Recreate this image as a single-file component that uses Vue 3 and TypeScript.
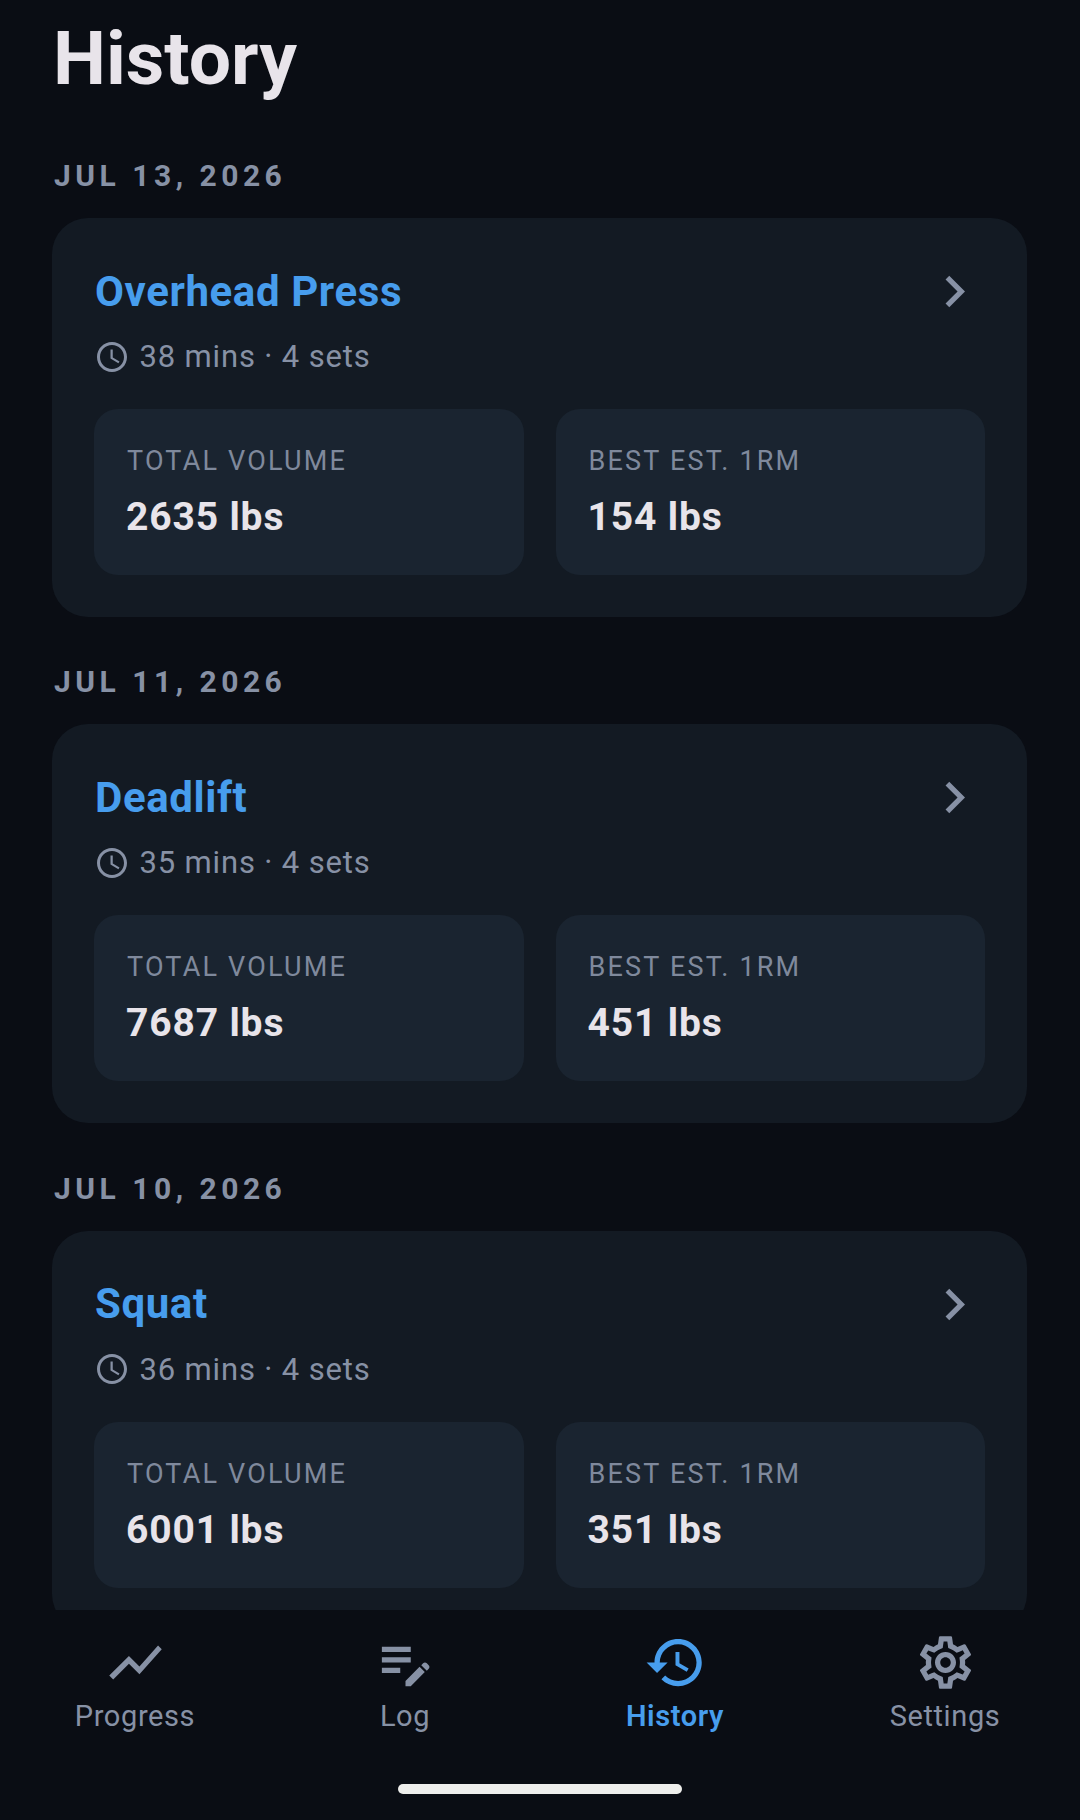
<script setup lang="ts">
interface Workout {
  date: string
  name: string
  mins: number
  sets: number
  volume: number
  best: number
}

const workouts: Workout[] = [
  { date: 'JUL 13, 2026', name: 'Overhead Press', mins: 38, sets: 4, volume: 2635, best: 154 },
  { date: 'JUL 11, 2026', name: 'Deadlift', mins: 35, sets: 4, volume: 7687, best: 451 },
  { date: 'JUL 10, 2026', name: 'Squat', mins: 36, sets: 4, volume: 6001, best: 351 },
]

const tabs = [
  {
    label: 'Progress',
    path: 'M3.5 18.49l6-6.01 4 4L22 6.92l-1.41-1.41-7.09 7.97-4-4L2 16.99z',
  },
  {
    label: 'Log',
    path: 'M3 10h11v2H3zm0-4h11v2H3zm0 8h7v2H3zM12 19l5.35-5.35 2 2L14 21h-2zM18 13l.71-.71c.39-.39 1.02-.39 1.41 0l.71.71c.39.39.39 1.02 0 1.41l-.71.71z',
  },
  {
    label: 'History',
    active: true,
    path: 'M13 3c-4.97 0-9 4.03-9 9H1l3.89 3.89.07.14L9 12H6c0-3.87 3.13-7 7-7s7 3.13 7 7-3.13 7-7 7c-1.93 0-3.68-.79-4.94-2.06l-1.42 1.42C8.27 19.99 10.51 21 13 21c4.97 0 9-4.03 9-9s-4.03-9-9-9zm-1 5v5l4.28 2.54.72-1.21-3.5-2.08V8H12z',
  },
  {
    label: 'Settings',
    path: 'M19.43 12.98c.04-.32.07-.64.07-.98 0-.34-.03-.66-.07-.98l2.11-1.65c.19-.15.24-.42.12-.64l-2-3.46c-.09-.16-.26-.25-.44-.25-.06 0-.12.01-.17.03l-2.49 1c-.52-.4-1.08-.73-1.69-.98l-.38-2.65C14.46 2.18 14.25 2 14 2h-4c-.25 0-.46.18-.49.42l-.38 2.65c-.61.25-1.17.59-1.69.98l-2.49-1c-.06-.02-.12-.03-.18-.03-.17 0-.34.09-.43.25l-2 3.46c-.13.22-.07.49.12.64l2.11 1.65c-.04.32-.07.65-.07.98 0 .33.03.66.07.98l-2.11 1.65c-.19.15-.24.42-.12.64l2 3.46c.09.16.26.25.44.25.06 0 .12-.01.17-.03l2.49-1c.52.4 1.08.73 1.69.98l.38 2.65c.03.24.24.42.49.42h4c.25 0 .46-.18.49-.42l.38-2.65c.61-.25 1.17-.59 1.69-.98l2.49 1c.06.02.12.03.18.03.17 0 .34-.09.43-.25l2-3.46c.12-.22.07-.49-.12-.64l-2.11-1.65zm-1.98-1.71c.04.31.05.52.05.73 0 .21-.02.43-.05.73l-.14 1.13.89.7 1.08.84-.7 1.21-1.27-.51-1.04-.42-.9.68c-.43.32-.84.56-1.25.73l-1.06.43-.16 1.13-.2 1.35h-1.4l-.19-1.35-.16-1.13-1.06-.43c-.43-.18-.83-.41-1.23-.71l-.91-.7-1.06.43-1.27.51-.7-1.21 1.08-.84.89-.7-.14-1.13c-.03-.31-.05-.54-.05-.74s.02-.43.05-.73l.14-1.13-.89-.7-1.08-.84.7-1.21 1.27.51 1.04.42.9-.68c.43-.32.84-.56 1.25-.73l1.06-.43.16-1.13.2-1.35h1.39l.19 1.35.16 1.13 1.06.43c.43.18.83.41 1.23.71l.91.7 1.06-.43 1.27-.51.7 1.21-1.07.85-.89.7.14 1.13zM12 8c-2.21 0-4 1.79-4 4s1.79 4 4 4 4-1.79 4-4-1.79-4-4-4zm0 6c-1.1 0-2-.9-2-2s.9-2 2-2 2 .9 2 2-.9 2-2 2z',
  },
]
</script>

<template>
  <div class="screen">
    <main class="content">
      <h1 class="title">History</h1>
      <section v-for="w in workouts" :key="w.date" class="day">
        <div class="date">{{ w.date }}</div>
        <div class="card">
          <div class="card-head">
            <span class="name">{{ w.name }}</span>
            <svg class="chevron" viewBox="0 0 24 24"><path d="M10 6 8.59 7.41 13.17 12l-4.58 4.59L10 18l6-6z" /></svg>
          </div>
          <div class="meta">
            <svg class="clock" viewBox="0 0 24 24"><path d="M11.99 2C6.47 2 2 6.48 2 12s4.47 10 9.99 10C17.52 22 22 17.52 22 12S17.52 2 11.99 2zM12 20c-4.42 0-8-3.58-8-8s3.58-8 8-8 8 3.58 8 8-3.58 8-8 8zm.5-13H11v6l5.25 3.15.75-1.23-4.5-2.67z" /></svg>
            <span>{{ w.mins }} mins · {{ w.sets }} sets</span>
          </div>
          <div class="stats">
            <div class="stat">
              <div class="stat-label">TOTAL VOLUME</div>
              <div class="stat-value">{{ w.volume }} lbs</div>
            </div>
            <div class="stat">
              <div class="stat-label">BEST EST. 1RM</div>
              <div class="stat-value">{{ w.best }} lbs</div>
            </div>
          </div>
        </div>
      </section>
    </main>

    <nav class="nav">
      <div class="tabs">
        <div v-for="t in tabs" :key="t.label" class="tab" :class="{ active: t.active }">
          <svg class="tab-icon" viewBox="0 0 24 24"><path :d="t.path" /></svg>
          <span class="tab-label">{{ t.label }}</span>
        </div>
      </div>
      <div class="home-pill"></div>
    </nav>
  </div>
</template>

<style scoped>
.screen {
  width: 1080px;
  height: 1820px;
  display: flex;
  flex-direction: column;
  background: #0a0d14;
  font-family: Roboto, "Liberation Sans", sans-serif;
  overflow: hidden;
}

.content {
  flex: 1;
  min-height: 0;
  overflow: hidden;
  padding: 16px 53px 0 52px;
}

.title {
  margin: 0 0 56px 1px;
  font-size: 75px;
  line-height: 84px;
  font-weight: 700;
  color: #e8e4ea;
}

.day {
  margin-bottom: 45.4px;
}

.date {
  margin: 0 0 22px 2px;
  font-size: 30px;
  line-height: 40px;
  font-weight: 700;
  letter-spacing: 4.5px;
  color: #8791a5;
}

.card {
  height: 399px;
  box-sizing: border-box;
  padding: 42px;
  border-radius: 36px;
  background: #131a23;
}

.card-head {
  height: 63px;
  display: flex;
  align-items: center;
  justify-content: space-between;
}

.name {
  margin-left: 1px;
  font-size: 42px;
  line-height: 50px;
  font-weight: 700;
  letter-spacing: 0.6px;
  color: #479ded;
}

.chevron {
  width: 63px;
  height: 63px;
  margin-right: -1px;
  fill: #8791a5;
}

.meta {
  margin-top: 15.5px;
  height: 36px;
  display: flex;
  align-items: center;
  gap: 9.5px;
  font-size: 31px;
  letter-spacing: 0.85px;
  color: #8791a5;
}

.clock {
  width: 36px;
  height: 36px;
  fill: #8791a5;
}

.stats {
  margin-top: 34.5px;
  display: grid;
  grid-template-columns: 1fr 1fr;
  gap: 32px;
}

.stat {
  padding: 34px 32px;
  border-radius: 24px;
  background: #1a2430;
}

.stat-label {
  margin-left: 1px;
  font-size: 27px;
  line-height: 36px;
  letter-spacing: 2.2px;
  color: #7f899c;
}

.stat-value {
  margin-top: 14px;
  font-size: 39px;
  line-height: 48px;
  font-weight: 700;
  letter-spacing: 0.85px;
  color: #e8e4ea;
}

.nav {
  height: 210px;
  flex: none;
  display: flex;
  flex-direction: column;
  align-items: center;
  background: #0a0d14;
}

.tabs {
  width: 100%;
  margin-top: 21px;
  display: grid;
  grid-template-columns: repeat(4, 1fr);
}

.tab {
  display: flex;
  flex-direction: column;
  align-items: center;
  color: #8791a5;
}

.tab-icon {
  width: 63px;
  height: 63px;
  fill: currentColor;
}

.tab-label {
  margin-top: 2px;
  font-size: 29px;
  line-height: 40px;
  letter-spacing: 0.6px;
}

.tab.active {
  color: #479ded;
}

.tab.active .tab-label {
  font-weight: 600;
}

.home-pill {
  width: 284px;
  height: 10px;
  margin-top: 48px;
  border-radius: 5px;
  background: #eeeeec;
}
</style>
